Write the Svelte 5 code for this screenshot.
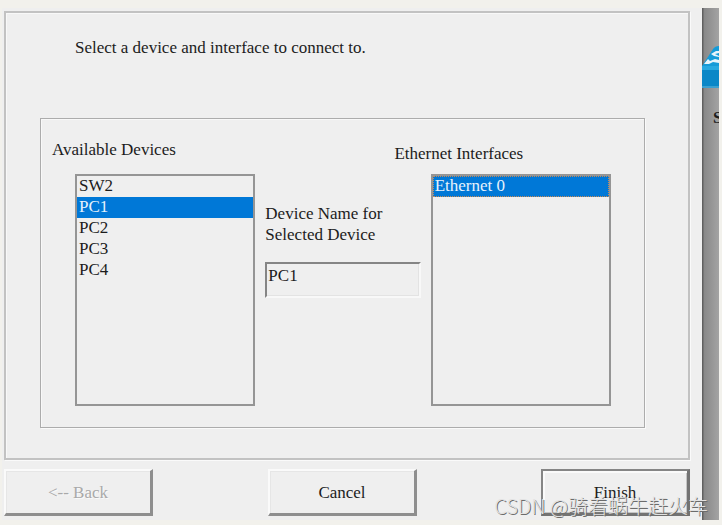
<script>
    let devices = ['SW2', 'PC1', 'PC2', 'PC3', 'PC4'];
    let interfaces = ['Ethernet 0'];

    let device = 'PC1';
    let port = 'Ethernet 0';
</script>

<style>
    :global(body) {
        margin: 0;
        background: #f2f1ec;
    }

    .screen {
        position: relative;
        display: flex;
        padding: 8px 3px 6px 2px;
        font-family: 'Liberation Serif', 'Times New Roman', serif;
        font-size: 17px;
        line-height: 21px;
        color: #1c1c1c;
    }

    .dialog {
        flex: 1;
        min-width: 0;
        padding: 3px 12px 4px 2px;
        background: #efefef;
    }

    .panel,
    .group {
        border: 2px solid #c2c2c2;
        box-shadow: 1px 1px 0 #fafafa, inset 1px 1px 0 #f8f8f8;
    }

    .panel {
        padding: 24px 43px 30px 34px;
    }

    .intro {
        margin: 0 0 60px 35px;
    }

    .group {
        padding: 20px 33px 21px 11px;
        border: 1px solid #acacac;
    }

    .titles {
        display: grid;
        grid-template-columns: 343fr 217fr;
    }

    .titles label:last-child {
        padding-top: 4px;
    }

    .columns {
        display: grid;
        grid-template-columns: 180fr 155fr 180fr;
        gap: 10px;
        padding: 10px 0 0 23px;
    }

    select {
        box-sizing: border-box;
        width: 100%;
        height: 232px;
        padding: 0;
        border: 2px solid #959595;
        border-radius: 0;
        outline: none;
        background: #efefef;
        font: inherit;
        color: inherit;
        overflow: hidden;
        scrollbar-width: none;
    }

    option {
        min-height: 21px;
        padding: 0 2px;
        box-sizing: border-box;
        line-height: 21px;
    }

    option:checked {
        background: #0078d7 linear-gradient(#0078d7, #0078d7);
        color: #e6f2fc;
        -webkit-text-fill-color: #e6f2fc;
    }

    .ports option:checked {
        outline: 1px dotted #c88a55;
        outline-offset: -1px;
    }

    .name {
        padding-top: 29px;
    }

    .name label {
        display: block;
        max-width: 125px;
        margin-bottom: 17px;
    }

    input {
        box-sizing: border-box;
        width: 100%;
        height: 36px;
        padding: 0 0 8px 1px;
        border: solid;
        border-width: 2px;
        border-color: #858585 #f8f8f8 #f8f8f8 #858585;
        outline: none;
        background: #efefef;
        box-shadow: inset -1px -1px 0 #e3e3e3;
        font: inherit;
        color: inherit;
    }

    .buttons {
        display: grid;
        grid-template-columns: 264fr 273fr 149px;
        padding-top: 9px;
    }

    button {
        width: 149px;
        height: 47px;
        padding: 0;
        border: solid;
        border-width: 2px 3px 3px 2px;
        border-color: #fafafa #8e8e8e #8e8e8e #fafafa;
        background: #efefef;
        box-shadow: inset 1px 1px 0 #e6e6e6;
        font: inherit;
        color: inherit;
    }

    button:disabled {
        color: #a9a9a9;
        text-shadow: 1px 1px 0 #fafafa;
    }

    .default {
        border-color: #858585 #737373 #737373 #858585;
        box-shadow: inset 2px 2px 0 #fafafa, inset -1px -1px 0 #c4c4c4;
    }

    .workspace {
        width: 17px;
        overflow: hidden;
        background: linear-gradient(to right, #606060 0, #606060 1px, #888888 2px, #a3a3a3 17px);
    }

    .workspace svg {
        display: block;
        margin-top: 37px;
    }

    .workspace span {
        display: block;
        margin: 19px 0 0 11px;
        font-weight: bold;
    }

    .watermark {
        position: absolute;
        right: 14px;
        bottom: 5px;
        font-family: 'Noto Sans CJK SC', sans-serif;
        font-size: 20px;
        font-weight: 300;
        line-height: 30px;
        white-space: nowrap;
        color: #e2e2e2;
        text-shadow: 1px 1px 0 #6c6c6c;
        pointer-events: none;
    }
</style>

<div class="screen">
    <main class="dialog">
        <div class="panel">
            <p class="intro">Select a device and interface to connect to.</p>
            <div class="group">
                <div class="titles">
                    <label for="devices">Available Devices</label>
                    <label for="ports">Ethernet Interfaces</label>
                </div>
                <div class="columns">
                    <select id="devices" size="11" bind:value={device}>
                        {#each devices as item}
                            <option value={item}>{item}</option>
                        {/each}
                    </select>
                    <div class="name">
                        <label for="name">Device Name for Selected Device</label>
                        <input id="name" type="text" value={device} readonly>
                    </div>
                    <select id="ports" class="ports" size="11" bind:value={port}>
                        {#each interfaces as item}
                            <option value={item}>{item}</option>
                        {/each}
                    </select>
                </div>
            </div>
        </div>
        <div class="buttons">
            <button type="button" disabled>&lt;-- Back</button>
            <button type="button">Cancel</button>
            <button type="button" class="default">Finish</button>
        </div>
    </main>
    <div class="workspace">
        <svg width="17" height="43" viewBox="0 0 17 43" aria-hidden="true">
            <path d="M0 21 L11 4 Q13 1 17 1 V24 H0z" fill="#159bd8" />
            <path d="M9 9 L14 6 L17 6 V8 L13 9 L17 11 V12 L12 11z" fill="#e9f5fb" />
            <path d="M2 19 L6 14 L8 16 L13 14 L17 15 V18 L11 17 L7 19z" fill="#e9f5fb" />
            <path d="M0 21 H17 V26 H0z" fill="#27a9e1" />
            <path d="M0 25 H17 V42 H0z" fill="#0a87c7" />
            <path d="M0 41 H17 V43 H0z" fill="#3ba0d0" />
        </svg>
        <span>S</span>
    </div>
    <div class="watermark">CSDN @骑着蜗牛赶火车</div>
</div>
